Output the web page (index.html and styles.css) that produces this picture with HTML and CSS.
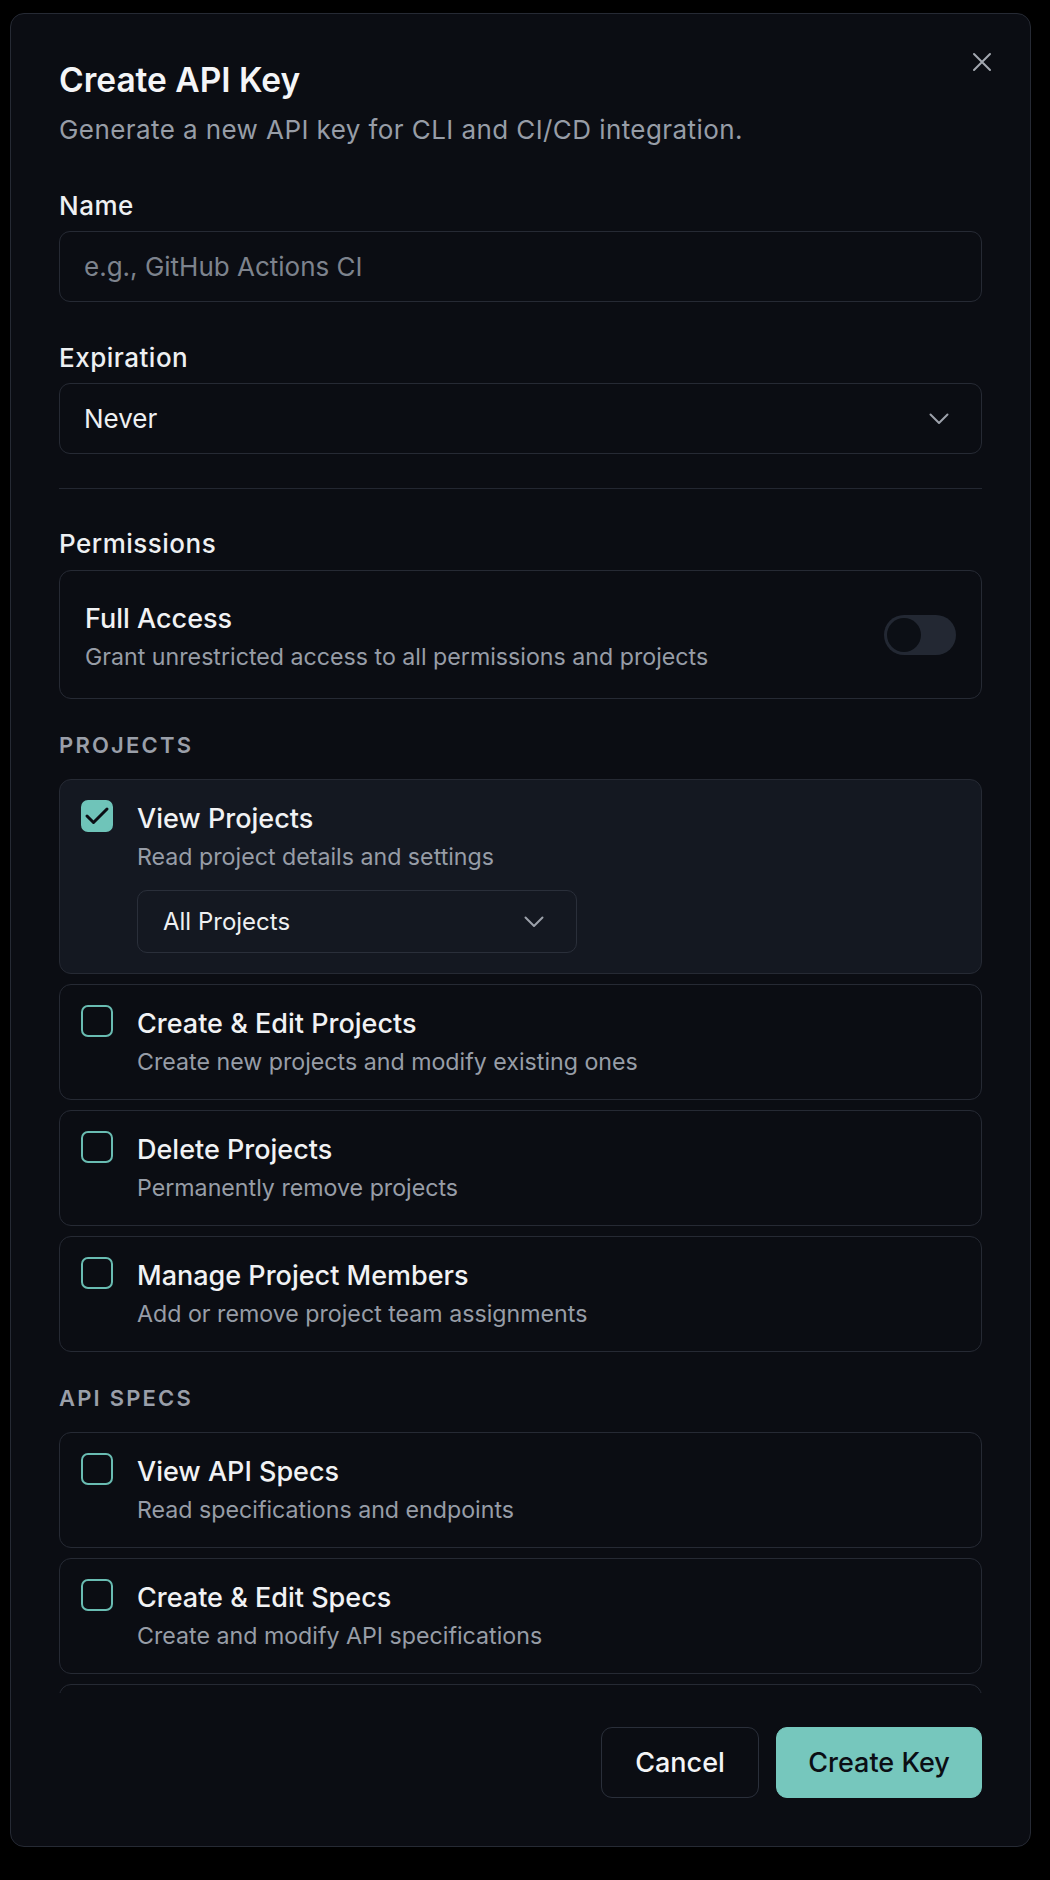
FILE: index.html
```html
<!DOCTYPE html>
<html lang="en">
<head>
<meta charset="utf-8">
<title>Create API Key</title>
<link rel="stylesheet" href="styles.css">
</head>
<body>
<div class="modal">
  <button class="close" aria-label="Close">
    <svg width="20" height="20" viewBox="0 0 20 20"><path d="M2 2L18 18M18 2L2 18" stroke="currentColor" stroke-width="2" stroke-linecap="round"/></svg>
  </button>
  <div class="header">
    <h1 class="title">Create API Key</h1>
    <p class="subtitle">Generate a new API key for CLI and CI/CD integration.</p>
  </div>
  <div class="body">
    <div class="field">
      <label class="label">Name</label>
      <div class="input"><span class="placeholder">e.g., GitHub Actions CI</span></div>
    </div>
    <div class="field">
      <label class="label">Expiration</label>
      <div class="input select"><span class="value">Never</span>
        <svg class="chev" width="20" height="12" viewBox="0 0 20 12"><path d="M1.5 1.5L10 10L18.5 1.5" fill="none" stroke="currentColor" stroke-width="2" stroke-linecap="round" stroke-linejoin="round"/></svg>
      </div>
    </div>
    <div class="divider"></div>
    <div class="field perms">
      <label class="label">Permissions</label>
      <div class="card full">
        <div class="full-text">
          <div class="ptitle">Full Access</div>
          <div class="pdesc">Grant unrestricted access to all permissions and projects</div>
        </div>
        <div class="toggle"><span class="knob"></span></div>
      </div>
    </div>

    <div class="section">PROJECTS</div>
    <div class="cards">
      <div class="card perm active">
        <span class="check on">
          <svg width="26" height="20" viewBox="0 0 26 20"><path d="M3 10L9.5 16.5L23 3" fill="none" stroke="#0b0e14" stroke-width="3" stroke-linecap="round" stroke-linejoin="round"/></svg>
        </span>
        <div class="ptext">
          <div class="ptitle">View Projects</div>
          <div class="pdesc">Read project details and settings</div>
          <div class="subselect"><span>All Projects</span>
            <svg class="chev" width="20" height="12" viewBox="0 0 20 12"><path d="M1.5 1.5L10 10L18.5 1.5" fill="none" stroke="currentColor" stroke-width="2" stroke-linecap="round" stroke-linejoin="round"/></svg>
          </div>
        </div>
      </div>
      <div class="card perm">
        <span class="check"></span>
        <div class="ptext">
          <div class="ptitle">Create &amp; Edit Projects</div>
          <div class="pdesc">Create new projects and modify existing ones</div>
        </div>
      </div>
      <div class="card perm">
        <span class="check"></span>
        <div class="ptext">
          <div class="ptitle">Delete Projects</div>
          <div class="pdesc">Permanently remove projects</div>
        </div>
      </div>
      <div class="card perm">
        <span class="check"></span>
        <div class="ptext">
          <div class="ptitle">Manage Project Members</div>
          <div class="pdesc">Add or remove project team assignments</div>
        </div>
      </div>
    </div>

    <div class="section">API SPECS</div>
    <div class="cards">
      <div class="card perm">
        <span class="check"></span>
        <div class="ptext">
          <div class="ptitle">View API Specs</div>
          <div class="pdesc">Read specifications and endpoints</div>
        </div>
      </div>
      <div class="card perm">
        <span class="check"></span>
        <div class="ptext">
          <div class="ptitle">Create &amp; Edit Specs</div>
          <div class="pdesc">Create and modify API specifications</div>
        </div>
      </div>
      <div class="card perm peek"></div>
    </div>
  </div>
  <div class="footer">
    <button class="btn cancel">Cancel</button>
    <button class="btn primary">Create Key</button>
  </div>
</div>
</body>
</html>
```
FILE: styles.css
```css
* { box-sizing: border-box; }
html, body { margin: 0; padding: 0; }
body {
  background: #000;
  font-family: Inter, "Noto Sans", sans-serif;
  color: #f1f2f4;
  padding: 13px 19px 0 10px;
}
.modal {
  position: relative;
  width: 1021px;
  height: 1834px;
  background: #0b0d13;
  border: 1px solid #262a34;
  border-radius: 14px;
  display: flex;
  flex-direction: column;
  padding: 46px 48px 48px 48px;
}
.close {
  position: absolute;
  top: 38px;
  right: 38px;
  width: 20px;
  height: 20px;
  padding: 0;
  border: 0;
  background: none;
  color: #a3a8b0;
  display: flex;
}
.header { flex: none; }
.title {
  margin: 0;
  font-size: 33.5px;
  line-height: 40px;
  font-weight: 600;
  color: #f4f5f7;
  letter-spacing: 0;
}
.subtitle {
  margin: 13px 0 0;
  font-size: 26px;
  line-height: 34px;
  letter-spacing: 0.42px;
  color: #979da7;
}
.body {
  flex: 1;
  min-height: 0;
  overflow: hidden;
  padding-top: 42px;
}
.field { display: flex; flex-direction: column; gap: 8px; }
.field + .field { margin-top: 39px; }
.label {
  font-size: 26px;
  line-height: 34px;
  font-weight: 500;
  letter-spacing: 0.5px;
  color: #eef0f2;
}
.input {
  height: 71px;
  border: 1px solid #262a34;
  border-radius: 11px;
  padding: 0 24px;
  display: flex;
  align-items: center;
  font-size: 26px;
}
.placeholder { color: #7d838d; }
.value { color: #eef0f2; }
.select { justify-content: space-between; padding-right: 32px; }
.chev { color: #9ca1aa; flex: none; }
.divider { height: 1px; background: #232731; margin: 34px 0 38px; }
.perms { gap: 9px; }
.card {
  border: 1px solid #262a34;
  border-radius: 12px;
}
.full {
  display: flex;
  align-items: center;
  justify-content: space-between;
  padding: 30px 25px 24px 25px;
}
.ptitle {
  font-size: 27px;
  line-height: 36px;
  font-weight: 500;
  color: #f1f2f4;
}
.pdesc {
  font-size: 23.2px;
  line-height: 33px;
  color: #979da7;
  margin-top: 4px;
}
.toggle {
  width: 72px;
  height: 40px;
  border-radius: 20px;
  background: #232833;
  padding: 3px;
  display: flex;
  align-items: center;
  margin-top: -6px;
}
.knob {
  width: 34px;
  height: 34px;
  border-radius: 50%;
  background: #0c0f15;
}
.section {
  margin-top: 31px;
  font-size: 22px;
  line-height: 30px;
  font-weight: 600;
  letter-spacing: 2.2px;
  color: #9a9fa9;
}
.cards {
  margin-top: 19px;
  display: flex;
  flex-direction: column;
  gap: 10px;
}
.perm {
  display: flex;
  align-items: flex-start;
  gap: 24px;
  padding: 20px 22px 20px 21px;
}
.perm.peek { height: 116px; }
.perm.active { background: #141821; }
.check {
  flex: none;
  width: 32px;
  height: 32px;
  border: 2px solid #69bcb2;
  border-radius: 7px;
}
.check.on {
  background: #6fc4b9;
  border-color: #6fc4b9;
  display: flex;
  align-items: center;
  justify-content: center;
}
.ptext { flex: 1; min-width: 0; padding-top: 1px; }
.subselect {
  margin-top: 16px;
  width: 440px;
  height: 63px;
  border: 1px solid #2a2f3a;
  border-radius: 10px;
  display: flex;
  align-items: center;
  justify-content: space-between;
  padding: 0 32px 0 25px;
  font-size: 24px;
  color: #eef0f2;
}
.footer {
  flex: none;
  display: flex;
  justify-content: flex-end;
  gap: 17px;
  padding-top: 34px;
}
.btn {
  height: 71px;
  border-radius: 11px;
  font-family: Inter, "Noto Sans", sans-serif;
  font-size: 27px;
  font-weight: 500;
}
.cancel {
  background: #0b0d13;
  border: 1px solid #2a2f3a;
  color: #f4f5f7;
  width: 158px;
}
.primary {
  background: #76c7bd;
  border: 1px solid #76c7bd;
  color: #0b0e14;
  width: 206px;
}
```
